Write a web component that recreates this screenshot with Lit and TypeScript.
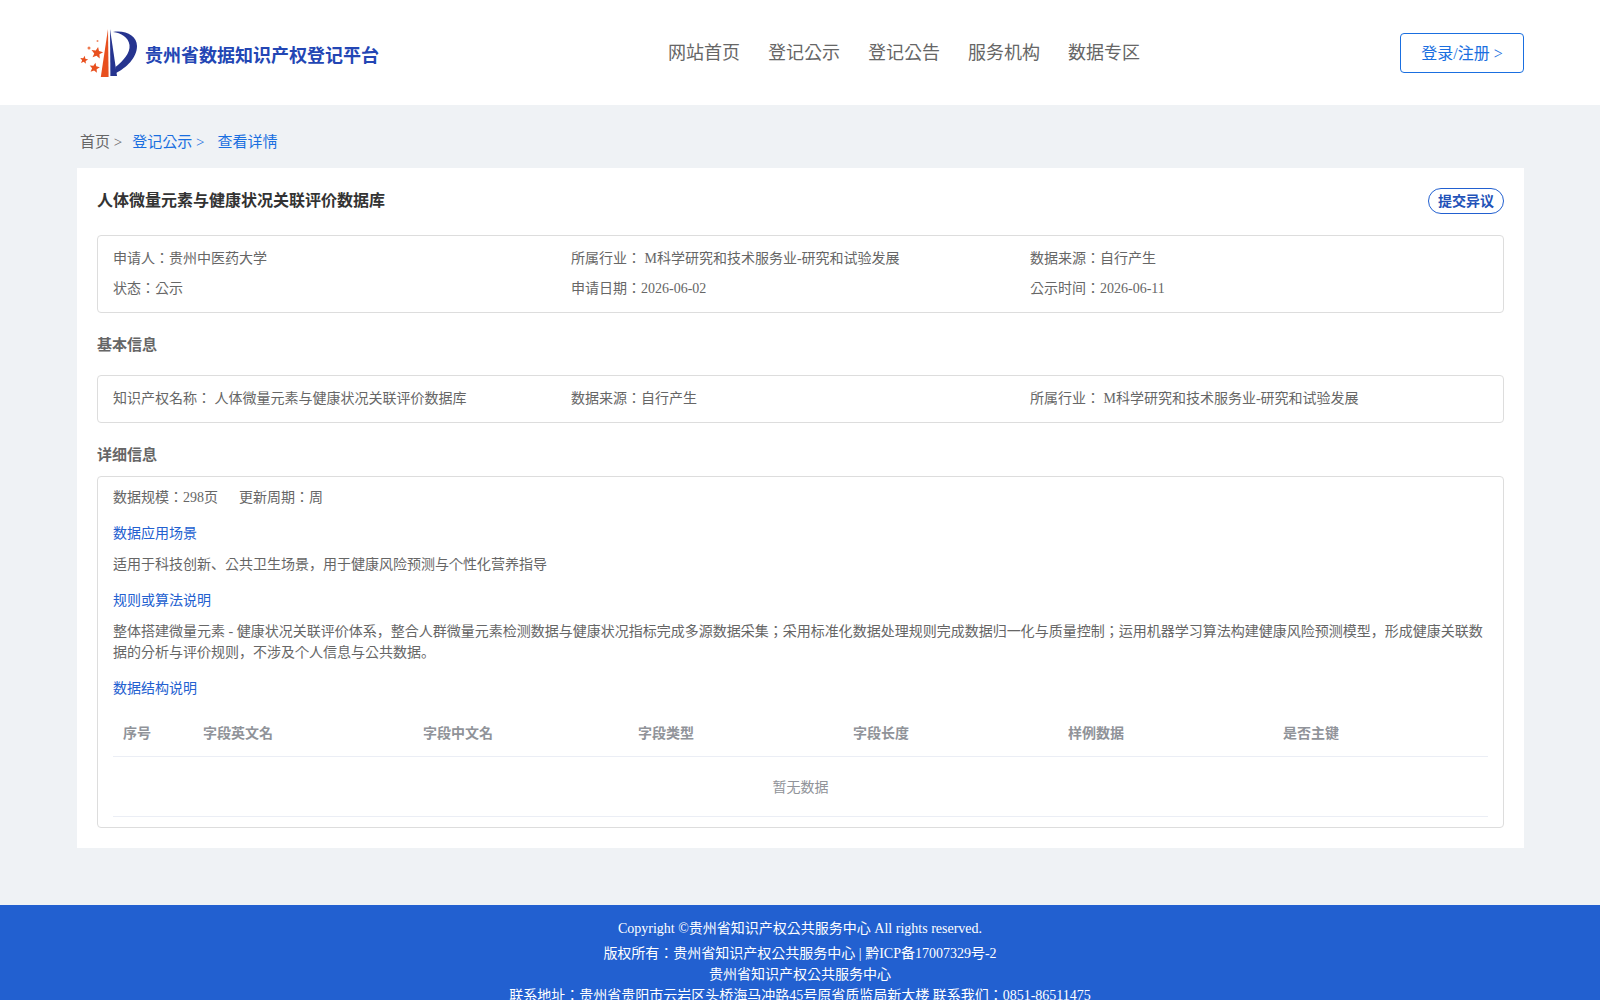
import { LitElement, html, css, svg } from 'lit';
import { customElement } from 'lit/decorators.js';

const star = (cx: number, cy: number, r: number, rot = 0) => {
  const pts: string[] = [];
  for (let i = 0; i < 10; i++) {
    const rad = i % 2 ? r * 0.45 : r;
    const a = ((-90 + rot + i * 36) * Math.PI) / 180;
    pts.push(`${(cx + rad * Math.cos(a)).toFixed(2)},${(cy + rad * Math.sin(a)).toFixed(2)}`);
  }
  return svg`<polygon points=${pts.join(' ')} fill="#e8501f"></polygon>`;
};

const COLUMNS = ['序号', '字段英文名', '字段中文名', '字段类型', '字段长度', '样例数据', '是否主键'];

@customElement('app-root')
export class AppRoot extends LitElement {
  static styles = css`
    :host {
      display: block;
      min-height: 1000px;
      background: #eff2f5;
      font-family: 'Liberation Serif', 'Noto Sans CJK KR', serif;
      font-size: 14px;
      color: #666;
    }

    /* === Header === */
    .header {
      height: 105px;
      background: #fff;
      display: flex;
      align-items: center;
      padding: 0 76px 0 80px;
      box-sizing: border-box;
    }

    .logo {
      width: 588px;
      display: flex;
      align-items: center;
      gap: 5px;
    }

    .logo svg {
      width: 60px;
      height: 52px;
      display: block;
    }

    .logo-title {
      font-size: 18px;
      font-weight: 700;
      color: #2346b4;
      padding-top: 2px;
    }

    .nav {
      display: flex;
      gap: 28px;
      font-size: 18px;
      color: #666;
      padding-bottom: 4px;
    }

    .login {
      margin-left: auto;
      width: 124px;
      height: 40px;
      box-sizing: border-box;
      border: 1px solid #1a6fe0;
      border-radius: 4px;
      display: flex;
      align-items: center;
      justify-content: center;
      font-size: 16px;
      color: #1a6fe0;
      padding-bottom: 2px;
    }

    /* === Breadcrumb === */
    .crumbs {
      height: 63px;
      box-sizing: border-box;
      padding: 8px 0 0 80px;
      display: flex;
      align-items: center;
      font-size: 15px;
    }

    .crumbs .blue {
      color: #1a6fe0;
    }

    .crumbs span:nth-child(2) {
      margin-left: 10px;
    }

    .crumbs span:nth-child(3) {
      margin-left: 13px;
    }

    /* === Card === */
    .card {
      margin: 0 76px 0 77px;
      height: 680px;
      box-sizing: border-box;
      background: #fff;
      padding: 20px 20px 0;
    }

    .title-row {
      display: flex;
      justify-content: space-between;
      align-items: flex-start;
      height: 47px;
    }

    .title {
      font-size: 16px;
      font-weight: 700;
      color: #333;
      line-height: 26px;
    }

    .dispute {
      width: 76px;
      height: 26px;
      box-sizing: border-box;
      border: 1px solid #2260d0;
      border-radius: 13px;
      display: flex;
      align-items: center;
      justify-content: center;
      font-size: 14px;
      font-weight: 700;
      color: #2252b8;
      padding-bottom: 2px;
    }

    .box {
      border: 1px solid #ddd;
      border-radius: 4px;
      padding: 0 15px;
    }

    .grid {
      display: grid;
      grid-template-columns: 458px 459px 1fr;
    }

    .grid div {
      line-height: 30px;
    }

    .box-info {
      height: 78px;
      box-sizing: border-box;
      padding-top: 8px;
    }

    .box-basic {
      height: 48px;
      box-sizing: border-box;
      padding-top: 8px;
    }

    .section {
      font-size: 15px;
      font-weight: 700;
      color: #666;
      line-height: 21px;
    }

    .section.basic {
      padding: 22px 0 19px;
    }

    .section.detail {
      padding: 22px 0 10px;
    }

    .box-detail {
      height: 352px;
      box-sizing: border-box;
      padding-top: 10px;
    }

    .line {
      line-height: 21px;
    }

    .scale span + span {
      margin-left: 21px;
    }

    .link {
      color: #2260d0;
      line-height: 21px;
      margin: 15px 0 10px;
    }

    /* === Table === */
    .thead,
    .tempty {
      border-bottom: 1px solid #ebeef5;
    }

    .thead {
      margin-top: 22px;
      height: 36px;
      box-sizing: border-box;
      display: grid;
      grid-template-columns: 80px 220px 215px 215px 215px 215px 1fr;
      padding-left: 10px;
      font-weight: 700;
      color: #909399;
      line-height: 21px;
      padding-top: 2px;
    }

    .tempty {
      height: 60px;
      box-sizing: border-box;
      display: flex;
      align-items: center;
      justify-content: center;
      color: #909399;
      padding-bottom: 2px;
    }

    /* === Footer === */
    .footer {
      margin-top: 57px;
      background: #2260d0;
      color: #fff;
      text-align: center;
      padding: 13px 0 10px;
      line-height: 21px;
    }

    .footer .copy {
      margin-bottom: 4px;
    }
  `;

  render() {
    return html`
      <div class="header">
        <div class="logo">
          <svg viewBox="80 27 60 52">
            <path d="M108 29 L108.6 77 L100.8 77 Z" fill="#e8501f"></path>
            <path d="M110 29 L117 76 L110.4 76 Z" fill="#26348f"></path>
            <path
              d="M113 32 C126 30 137 36 137 46 C137 58 126 68 116 73 L115.5 67 C123 61 130.5 53 129.5 45 C128.5 37 121 33 113 32 Z"
              fill="#26348f"
            ></path>
            ${star(97, 53, 6.2, 10)} ${star(94.5, 68, 5.4, 10)} ${star(84, 60, 4.2, 10)}
            <circle cx="89" cy="48" r="1.5" fill="#ee7a50"></circle>
            <circle cx="97.5" cy="41" r="1" fill="#ee8a66"></circle>
          </svg>
          <span class="logo-title">贵州省数据知识产权登记平台</span>
        </div>
        <div class="nav">
          <span>网站首页</span><span>登记公示</span><span>登记公告</span><span>服务机构</span><span>数据专区</span>
        </div>
        <div class="login">登录/注册 &gt;</div>
      </div>

      <div class="crumbs">
        <span>首页 &gt;</span><span class="blue">登记公示 &gt;</span><span class="blue">查看详情</span>
      </div>

      <div class="card">
        <div class="title-row">
          <div class="title">人体微量元素与健康状况关联评价数据库</div>
          <div class="dispute">提交异议</div>
        </div>

        <div class="box box-info">
          <div class="grid">
            <div>申请人：贵州中医药大学</div>
            <div>所属行业： M科学研究和技术服务业-研究和试验发展</div>
            <div>数据来源：自行产生</div>
            <div>状态：公示</div>
            <div>申请日期：2026-06-02</div>
            <div>公示时间：2026-06-11</div>
          </div>
        </div>

        <div class="section basic">基本信息</div>
        <div class="box box-basic">
          <div class="grid">
            <div>知识产权名称： 人体微量元素与健康状况关联评价数据库</div>
            <div>数据来源：自行产生</div>
            <div>所属行业： M科学研究和技术服务业-研究和试验发展</div>
          </div>
        </div>

        <div class="section detail">详细信息</div>
        <div class="box box-detail">
          <div class="line scale"><span>数据规模：298页</span><span>更新周期：周</span></div>
          <div class="link">数据应用场景</div>
          <div class="line">适用于科技创新、公共卫生场景，用于健康风险预测与个性化营养指导</div>
          <div class="link">规则或算法说明</div>
          <div class="line">
            整体搭建微量元素 - 健康状况关联评价体系，整合人群微量元素检测数据与健康状况指标完成多源数据采集；采用标准化数据处理规则完成数据归一化与质量控制；运用机器学习算法构建健康风险预测模型，形成健康关联数据的分析与评价规则，不涉及个人信息与公共数据。
          </div>
          <div class="link">数据结构说明</div>
          <div class="thead">${COLUMNS.map(c => html`<span>${c}</span>`)}</div>
          <div class="tempty">暂无数据</div>
        </div>
      </div>

      <div class="footer">
        <div class="copy">Copyright ©贵州省知识产权公共服务中心 All rights reserved.</div>
        <div>版权所有：贵州省知识产权公共服务中心 | 黔ICP备17007329号-2</div>
        <div>贵州省知识产权公共服务中心</div>
        <div>联系地址：贵州省贵阳市云岩区头桥海马冲路45号原省质监局新大楼 联系我们：0851-86511475</div>
      </div>
    `;
  }
}
